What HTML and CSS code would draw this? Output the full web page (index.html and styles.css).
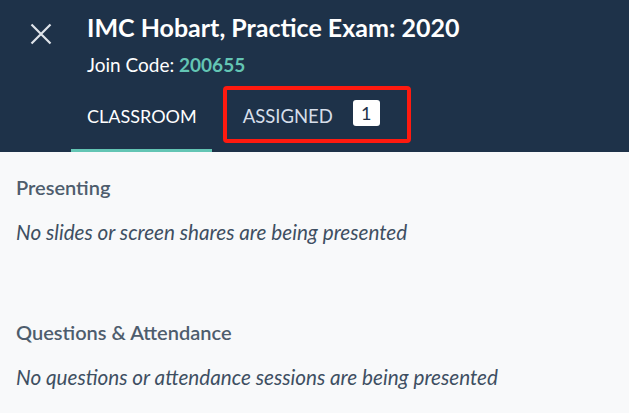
FILE: index.html
```html
<!DOCTYPE html>
<html>
<head>
<meta charset="utf-8">
<link rel="stylesheet" href="styles.css">
</head>
<body>
<header class="header">
  <div class="top">
    <button class="close" aria-label="Close">
      <svg width="22" height="22" viewBox="0 0 22 22"><path d="M1.5 1.5 L20.5 20.5 M20.5 1.5 L1.5 20.5" stroke="#dfe4ea" stroke-width="2.2" fill="none"/></svg>
    </button>
    <div class="titles">
      <h1 class="title">IMC Hobart, Practice Exam: 2020</h1>
      <div class="code">Join Code: <span class="code-num">200655</span></div>
    </div>
  </div>
  <nav class="tabs">
    <div class="tab active">CLASSROOM</div>
    <div class="tab assigned">ASSIGNED <span class="badge">1</span></div>
  </nav>
</header>
<main class="content">
  <section class="section">
    <h2 class="sec-title">Presenting</h2>
    <p class="empty">No slides or screen shares are being presented</p>
  </section>
  <section class="section">
    <h2 class="sec-title">Questions &amp; Attendance</h2>
    <p class="empty">No questions or attendance sessions are being presented</p>
  </section>
</main>
</body>
</html>
```

FILE: styles.css
```css
html, body {
  margin: 0;
  padding: 0;
  background: #f8f9fa;
  font-family: Lato, "Noto Sans", sans-serif;
}
.header {
  background: #1e3249;
  height: 152px;
  display: flex;
  flex-direction: column;
}
.top {
  display: flex;
  align-items: flex-start;
  padding: 12px 0 0 30px;
}
.close {
  background: none;
  border: 0;
  padding: 0;
  margin-top: 11px;
  width: 22px;
  height: 22px;
  display: flex;
}
.titles {
  margin-left: 35px;
}
.title {
  margin: 0;
  font-size: 25px;
  line-height: 30px;
  font-weight: 700;
  color: #ffffff;
}
.code {
  font-size: 19px;
  line-height: 24px;
  color: #ffffff;
  margin-top: 11px;
}
.code-num {
  color: #63c5b4;
  font-weight: 700;
}
.tabs {
  display: flex;
  padding-left: 71px;
  margin-top: auto;
  height: 66px;
}
.tab {
  position: relative;
  box-sizing: border-box;
  padding: 18px 16px 0;
  font-size: 18px;
  line-height: 24px;
  color: #e6eaef;
  display: flex;
  align-items: flex-start;
  border-bottom: 3px solid transparent;
}
.tab.active {
  color: #ffffff;
  border-bottom-color: #63c5b4;
  padding-left: 16px;
  padding-right: 15px;
}
.tab.assigned {
  margin-left: 15px;
  color: #d6deea;
  font-size: 18.5px;
}
.tab.assigned::after {
  content: "";
  position: absolute;
  left: -4px;
  right: -15px;
  top: 0;
  bottom: 6px;
  border: 4px solid #ff1a0f;
  border-radius: 4px;
}
.badge {
  margin-left: 20px;
  margin-top: -4px;
  width: 27px;
  height: 26px;
  border-radius: 3px;
  background: #ffffff;
  color: #1e3249;
  font-size: 18px;
  line-height: 26px;
  text-align: center;
}
.content {
  padding: 23px 16px 0;
}
.section + .section {
  margin-top: 75px;
}
.sec-title {
  margin: 0;
  font-size: 20px;
  line-height: 24px;
  font-weight: 600;
  color: #4e5d6d;
}
.empty {
  margin: 20px 0 0;
  font-size: 20.7px;
  line-height: 26px;
  font-style: italic;
  color: #3e4f62;
}
```
